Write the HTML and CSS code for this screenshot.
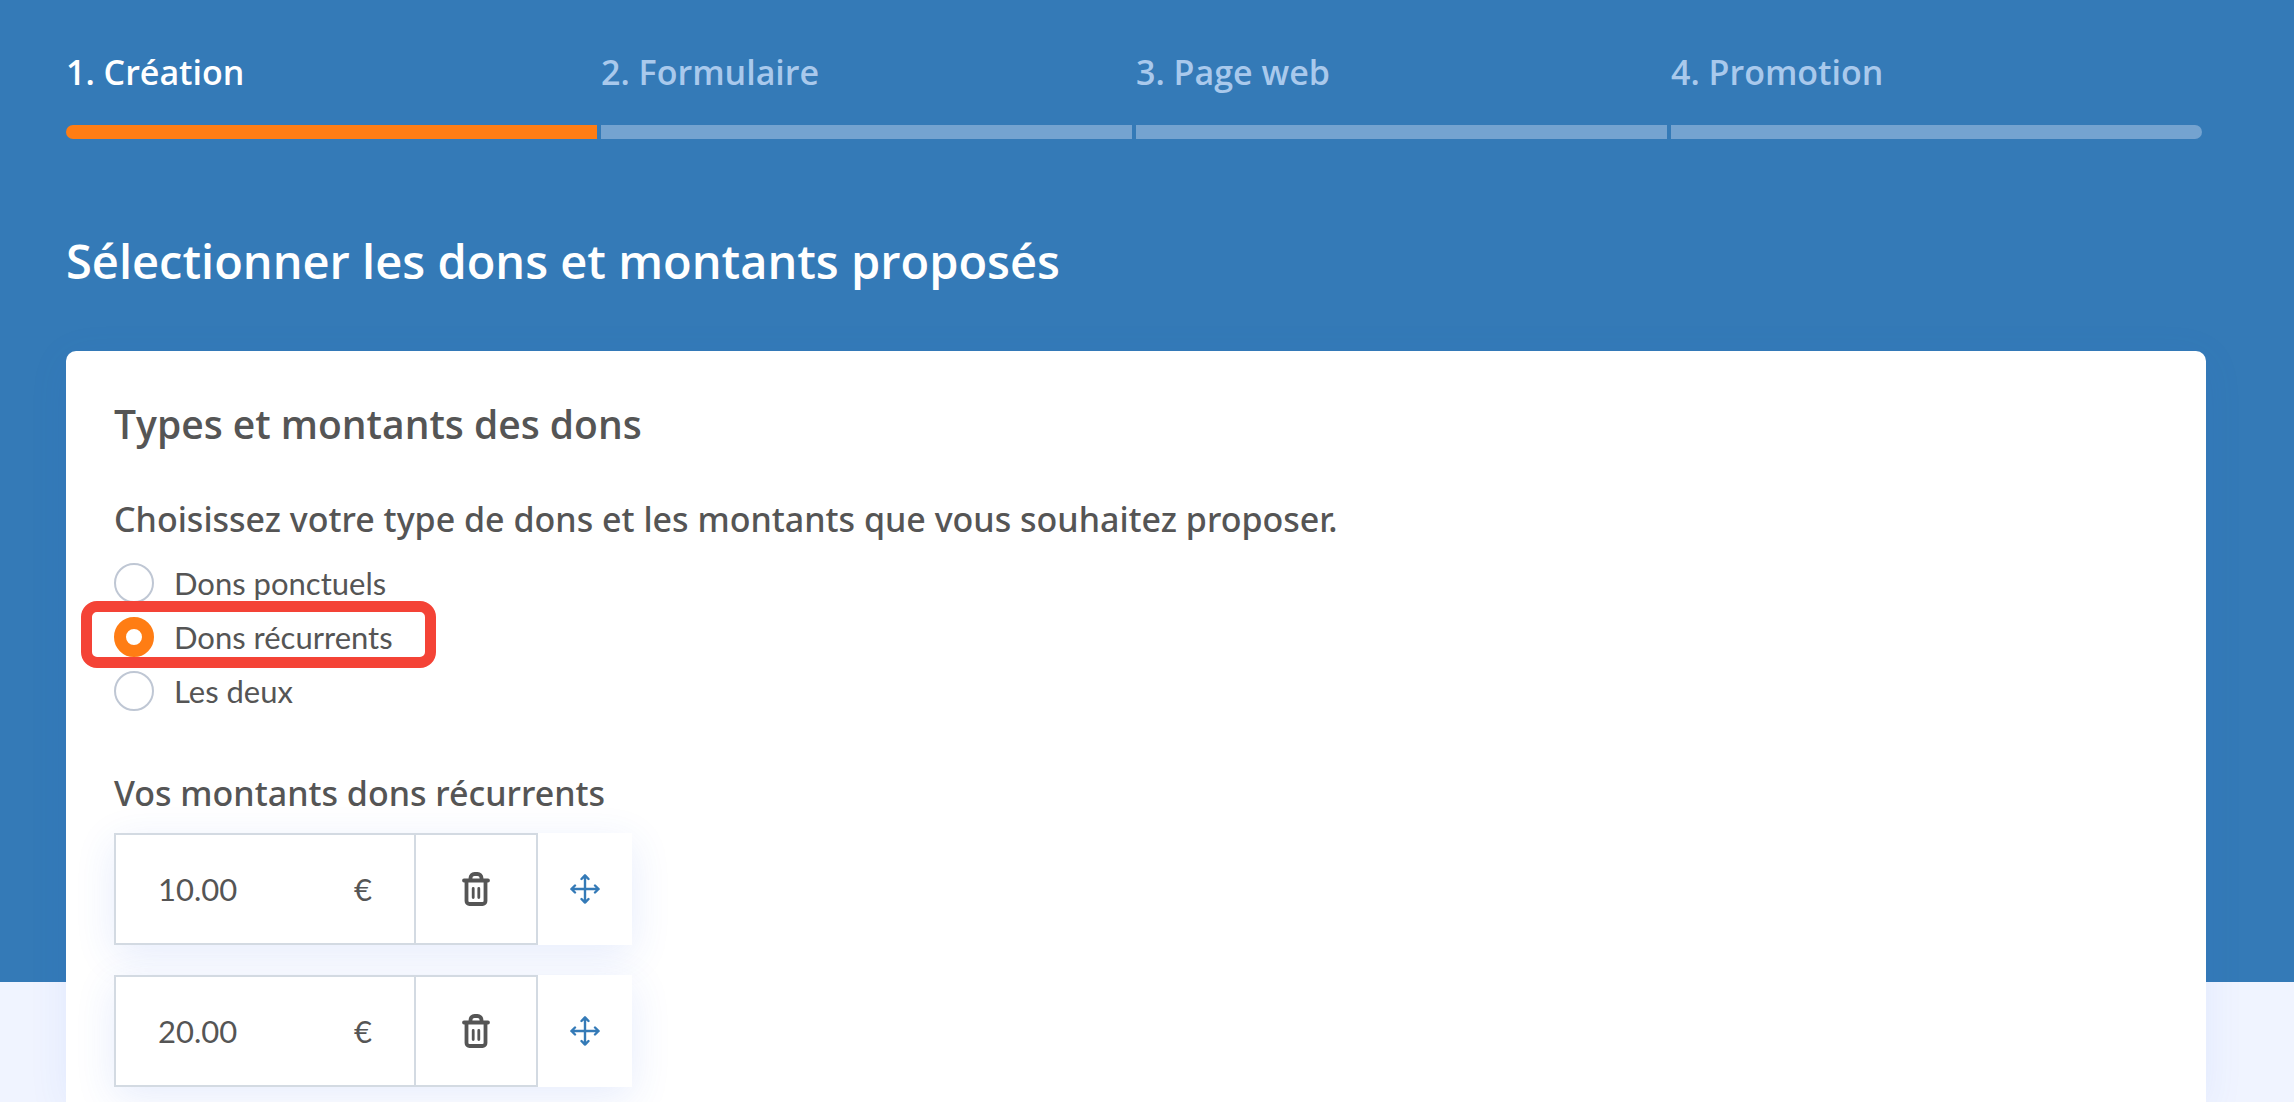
FILE: index.html
```
<!DOCTYPE html>
<html lang="fr">

<head>
    <meta charset="UTF-8">
    <meta name="viewport" content="width=device-width, initial-scale=1.0">
    <title>Sélectionner les dons et montants proposés</title>
    <link rel="stylesheet" href="styles.css">
</head>

<body>
    <svg class="sprite" aria-hidden="true">
        <symbol id="trash" viewBox="0 0 28 34">
            <g fill="none" stroke="currentColor" stroke-linecap="round" stroke-linejoin="round">
                <path stroke-width="3.800" d="M2 8.500h24M4.500 9v20a3 3 0 0 0 3 3h13a3 3 0 0 0 3-3v-20M8.500 8v-2a4 4 0 0 1 4-4h3a4 4 0 0 1 4 4v2" />
                <path stroke-width="2.800" d="M11.200 16.500v9M16.800 16.500v9" />
            </g>
        </symbol>
        <symbol id="move" viewBox="0 0 30 30">
            <path fill="none" stroke="currentColor" stroke-width="2.400" stroke-linecap="round" stroke-linejoin="round" d="M15 1.500v27M1.500 15h27M11.500 5l3.500-3.600 3.500 3.600M11.500 25l3.500 3.600 3.500-3.600M5 11.500l-3.600 3.500 3.600 3.500M25 11.500l3.600 3.500-3.600 3.500" />
        </symbol>
    </svg>

    <main class="page">
        <ol class="steps">
            <li class="step active">1. Création</li>
            <li class="step">2. Formulaire</li>
            <li class="step">3. Page web</li>
            <li class="step">4. Promotion</li>
        </ol>

        <h1>Sélectionner les dons et montants proposés</h1>

        <form class="card">
            <h2>Types et montants des dons</h2>

            <fieldset class="types">
                <legend>Choisissez votre type de dons et les montants que vous souhaitez proposer.</legend>
                <div class="choices">
                    <label class="choice"><input type="radio" name="type" value="ponctuels">Dons ponctuels</label>
                    <label class="choice highlight"><input type="radio" name="type" value="recurrents" checked>Dons récurrents</label>
                    <label class="choice"><input type="radio" name="type" value="deux">Les deux</label>
                </div>
            </fieldset>

            <h3>Vos montants dons récurrents</h3>
            <div class="amounts">
                <div class="amount">
                    <label class="field">
                        <input type="text" value="10.00" aria-label="Montant 1">
                        <span>€</span>
                    </label>
                    <button type="button" class="delete" aria-label="Supprimer"><svg><use href="#trash" /></svg></button>
                    <button type="button" class="drag" aria-label="Déplacer"><svg><use href="#move" /></svg></button>
                </div>
                <div class="amount">
                    <label class="field">
                        <input type="text" value="20.00" aria-label="Montant 2">
                        <span>€</span>
                    </label>
                    <button type="button" class="delete" aria-label="Supprimer"><svg><use href="#trash" /></svg></button>
                    <button type="button" class="drag" aria-label="Déplacer"><svg><use href="#move" /></svg></button>
                </div>
            </div>
        </form>
    </main>
</body>

</html>
```
FILE: styles.css
```
*,
*::after {
    box-sizing: border-box;
}

body {
    margin: 0;
    color: #555;
    font-family: Lato, sans-serif;
    font-size: 31px;
    background: linear-gradient(#347ab7 982px, #f0f4ff 982px);
}

h1,
h2,
h3 {
    margin: 0;
}

.sprite {
    display: none;
}

.page {
    display: flex;
    flex-direction: column;
    min-height: 100vh;
    padding: 48px 88px 0 66px;
}

.steps {
    display: grid;
    grid-template-columns: repeat(4, 1fr);
    gap: 4px;
    margin: 0 4px 0 0;
    padding: 0;
    list-style: none;
}

.step {
    color: #a9c9ec;
    font-family: "Open Sans", sans-serif;
    font-size: 34px;
    font-weight: 600;
    line-height: 48px;
}

.step::after {
    content: "";
    display: block;
    height: 14px;
    margin-top: 29px;
    background-color: #74a3d0;
}

.step:first-child::after {
    border-radius: 7px 0 0 7px;
}

.step:last-child::after {
    border-radius: 0 7px 7px 0;
}

.step.active {
    color: #fff;
}

.step.active::after {
    background-color: #ff7d14;
}

h1 {
    margin: 92px 0 60px;
    color: #fff;
    font-family: "Open Sans", sans-serif;
    font-size: 47px;
    font-weight: 600;
    line-height: 60px;
}

.card {
    flex: 1;
    padding: 48px 48px 12px;
    background-color: #fff;
    border-radius: 10px 10px 0 0;
    box-shadow: 0 8px 40px rgba(50, 100, 230, 0.08);
}

h2 {
    margin-bottom: 46px;
    font-family: "Open Sans", sans-serif;
    font-size: 39px;
    font-weight: 600;
    line-height: 50px;
}

.types {
    margin: 0;
    padding: 0;
    border: 0;
}

legend,
h3 {
    padding: 0;
    font-family: "Noto Sans", sans-serif;
    font-size: 34px;
    font-weight: 500;
    line-height: 48px;
}

.choices {
    display: flex;
    flex-direction: column;
    align-items: flex-start;
    gap: 14px;
    margin: 20px 0 58px;
}

.choice {
    position: relative;
    display: flex;
    align-items: center;
    gap: 20px;
    line-height: 40px;
}

.choice input {
    appearance: none;
    width: 40px;
    height: 40px;
    margin: 0;
    border: 2px solid #bfc7d4;
    border-radius: 50%;
    background-color: #fff;
}

.choice input:checked {
    border: 12px solid #ff7d14;
}

.highlight::after {
    content: "";
    position: absolute;
    top: -16px;
    bottom: -11px;
    left: -33px;
    width: 355px;
    border: 11px solid #f44336;
    border-radius: 16px;
    z-index: 1;
}

.amounts {
    display: flex;
    flex-direction: column;
    align-items: flex-start;
    gap: 30px;
    margin-top: 16px;
}

.amount {
    display: flex;
    height: 112px;
    background-color: #fff;
    box-shadow: 0 10px 40px rgba(50, 100, 230, 0.12);
}

.field {
    display: flex;
    align-items: center;
    justify-content: space-between;
    width: 302px;
    padding: 0 42px;
    border: 2px solid #d3dae2;
}

.field input {
    width: 120px;
    padding: 0;
    border: 0;
    color: inherit;
    background: none;
    font: inherit;
}

.amount button {
    display: flex;
    align-items: center;
    justify-content: center;
    padding: 0;
    border: 0;
    background-color: #fff;
}

.amount .delete {
    width: 122px;
    border: 2px solid #d3dae2;
    border-left: 0;
    color: #555;
}

.amount .drag {
    width: 94px;
    color: #347ab7;
}

.delete svg {
    width: 28px;
    height: 34px;
}

.drag svg {
    width: 30px;
    height: 30px;
}
```
